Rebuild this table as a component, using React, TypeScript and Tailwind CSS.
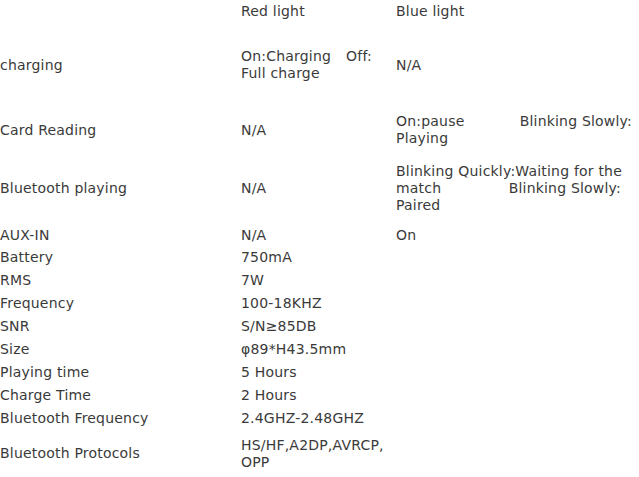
type Row = {
  label: string;
  red: React.ReactNode;
  blue?: React.ReactNode;
  h: string;
};

const rows: Row[] = [
  { label: "", red: "Red light", blue: "Blue light", h: "h-[22px]" },
  {
    label: "charging",
    red: (
      <>
        <div className="flex w-[131px] justify-between">
          <span>On:Charging</span>
          <span>Off:</span>
        </div>
        <div>Full charge</div>
      </>
    ),
    blue: "N/A",
    h: "h-[86px]",
  },
  {
    label: "Card Reading",
    red: "N/A",
    blue: (
      <>
        <div className="flex w-[236px] justify-between">
          <span>On:pause</span>
          <span>Blinking Slowly:</span>
        </div>
        <div>Playing</div>
      </>
    ),
    h: "h-[44px]",
  },
  {
    label: "Bluetooth playing",
    red: "N/A",
    blue: (
      <>
        <div className="whitespace-nowrap">Blinking Quickly:Waiting for the</div>
        <div className="flex w-[225px] justify-between">
          <span>match</span>
          <span>Blinking Slowly:</span>
        </div>
        <div>Paired</div>
      </>
    ),
    h: "h-[72px]",
  },
  { label: "AUX-IN", red: "N/A", blue: "On", h: "h-[22px]" },
  { label: "Battery", red: "750mA", h: "h-[23px]" },
  { label: "RMS", red: "7W", h: "h-[23px]" },
  { label: "Frequency", red: "100-18KHZ", h: "h-[23px]" },
  { label: "SNR", red: "S/N≥85DB", h: "h-[23px]" },
  { label: "Size", red: "φ89*H43.5mm", h: "h-[23px]" },
  { label: "Playing time", red: "5 Hours", h: "h-[23px]" },
  { label: "Charge Time", red: "2 Hours", h: "h-[23px]" },
  { label: "Bluetooth Frequency", red: "2.4GHZ-2.48GHZ", h: "h-[23px]" },
  {
    label: "Bluetooth Protocols",
    red: (
      <>
        <div>HS/HF,A2DP,AVRCP,</div>
        <div>OPP</div>
      </>
    ),
    h: "h-[47px]",
  },
];

export default function App() {
  return (
    <div className="w-[639px] h-[477px] overflow-hidden bg-white text-[#3a3a3a] text-[14px] leading-[17px] tracking-[0.2px] font-['DejaVu_Sans',sans-serif]">
      {rows.map((r, i) => (
        <div key={i} className={`grid grid-cols-[241px_155px_1fr] items-center ${r.h}`}>
          <div className="whitespace-nowrap">{r.label}</div>
          <div className="whitespace-nowrap">{r.red}</div>
          <div className="whitespace-nowrap">{r.blue}</div>
        </div>
      ))}
    </div>
  );
}
